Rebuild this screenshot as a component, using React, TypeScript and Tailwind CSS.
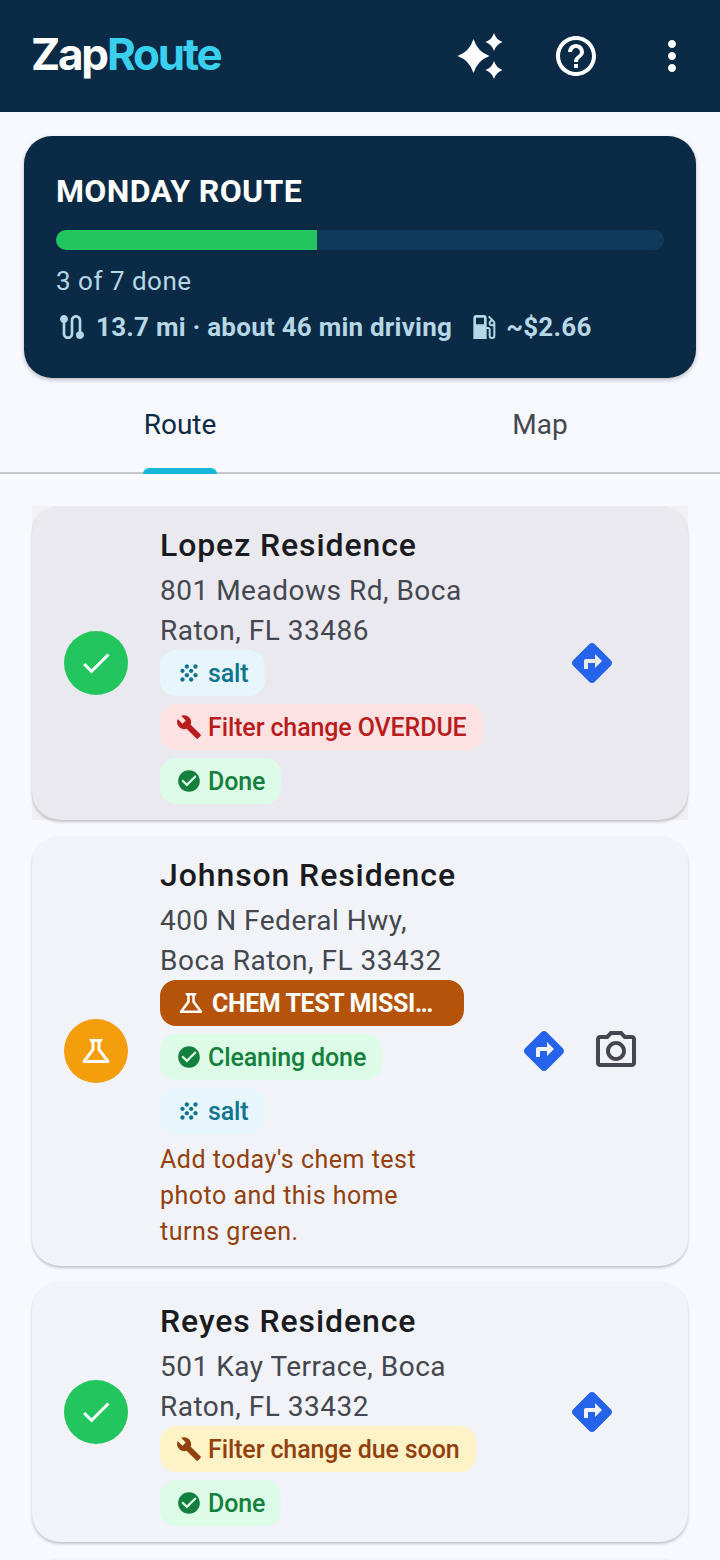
import { ReactNode } from "react";
import {
  MdHelpOutline,
  MdMoreVert,
  MdRoute,
  MdLocalGasStation,
  MdCheck,
  MdOutlineScience,
  MdGrain,
  MdCheckCircle,
  MdDirections,
  MdOutlineCameraAlt,
} from "react-icons/md";

const Wrench = () => (
  <svg viewBox="0 0 24 24" width={26} height={26} fill="currentColor" className="shrink-0">
    <path d="M22.7 19l-9.1-9.1c.9-2.3.4-5-1.5-6.9-2-2-5-2.4-7.4-1.3L9 6 6 9 1.6 4.7C.4 7.1.9 10.1 2.9 12.1c1.9 1.9 4.6 2.4 6.9 1.5l9.1 9.1c.4.4 1 .4 1.4 0l2.3-2.3c.5-.4.5-1.1.1-1.4z" />
  </svg>
);

const star = (cx: number, cy: number, rx: number, ry: number) => {
  const k = 0.25;
  return `M${cx} ${cy - ry}Q${cx + rx * k} ${cy - ry * k} ${cx + rx} ${cy}Q${cx + rx * k} ${cy + ry * k} ${cx} ${cy + ry}Q${cx - rx * k} ${cy + ry * k} ${cx - rx} ${cy}Q${cx - rx * k} ${cy - ry * k} ${cx} ${cy - ry}Z`;
};

const Sparkle = () => (
  <svg viewBox="0 0 48 48" width={48} height={48} fill="#ffffff">
    <path d={star(17.5, 24, 16, 17)} />
    <path d={star(38, 10, 8.5, 9)} />
    <path d={star(38, 38, 8.5, 9)} />
  </svg>
);

function Chip({ tone, icon, children }: { tone: string; icon: ReactNode; children: ReactNode }) {
  return (
    <div className={`flex h-[46px] w-fit items-center gap-[6px] whitespace-nowrap rounded-[16px] px-4 text-[25px] font-medium leading-none tracking-[-0.12px] ${tone}`}>
      {icon}
      <span className="pt-px">{children}</span>
    </div>
  );
}

const salt = (
  <Chip tone="bg-[#e6f6fc] text-[#0e7490]" icon={<MdGrain size={26} />}>
    salt
  </Chip>
);
const done = (label: string) => (
  <Chip tone="bg-[#dcfce7] text-[#15803d]" icon={<MdCheckCircle size={26} />}>
    {label}
  </Chip>
);

function Card({
  bg,
  status,
  title,
  address,
  children,
  trailing,
  pr,
}: {
  bg: string;
  status: ReactNode;
  title: string;
  address: string[];
  children: ReactNode;
  trailing: ReactNode;
  pr: string;
}) {
  return (
    <div className={`flex items-center rounded-[28px] py-4 pl-8 shadow-[0_2px_3px_rgba(0,0,0,0.22)] ${bg} ${pr}`}>
      {status}
      <div className="ml-8 w-[304px] shrink-0">
        <div className="text-[32px] font-medium leading-[46px] tracking-[0.9px] text-[#1a1b20]">{title}</div>
        <div className="mb-[-1px] mt-[3px] text-[28px] leading-[40px] tracking-[0.5px] text-[#44474f]">
          {address.map((a) => (
            <div key={a}>{a}</div>
          ))}
        </div>
        <div className="flex flex-col gap-2">{children}</div>
      </div>
      <div className="ml-auto flex items-center">{trailing}</div>
    </div>
  );
}

const Status = ({ color, icon }: { color: string; icon: ReactNode }) => (
  <div className={`flex h-16 w-16 shrink-0 items-center justify-center rounded-full text-white ${color}`}>{icon}</div>
);

const Dir = () => (
  <div className="flex h-[72px] w-[72px] items-center justify-center text-[#2563eb]">
    <MdDirections size={48} />
  </div>
);

export default function App() {
  return (
    <div className="h-[1560px] w-[720px] overflow-hidden bg-[#f8f9ff] font-['Roboto',sans-serif]">
      <header className="flex h-[112px] items-center bg-[#0b2a45] pl-8">
        <div className="-ml-px mb-[5px] font-['Inter',sans-serif] text-[44px] font-bold leading-none tracking-[-2.2px] text-white">
          Zap<span className="text-[#38d0ee]">Route</span>
        </div>
        <div className="ml-auto flex items-center text-white">
          <div className="flex h-[96px] w-[96px] items-center justify-center">
            <Sparkle />
          </div>
          <div className="flex h-[96px] w-[96px] items-center justify-center">
            <MdHelpOutline size={48} />
          </div>
          <div className="flex h-[96px] w-[96px] items-center justify-center">
            <MdMoreVert size={48} />
          </div>
        </div>
      </header>

      <section className="px-6 pt-6">
        <div className="rounded-[28px] bg-[#0b2a45] px-8 pb-8 pt-[35px] shadow-[0_2px_4px_rgba(0,0,0,0.25)]">
          <div className="text-[32px] font-bold leading-[40px] tracking-[0.35px] text-white">MONDAY ROUTE</div>
          <div className="mt-[19px] h-5 overflow-hidden rounded-[10px] bg-[#0f3a5c]">
            <div className="h-full bg-[#22c55e]" style={{ width: `${(3 / 7) * 100}%` }} />
          </div>
          <div className="mt-[12px] text-[26px] leading-[38px] tracking-[0.5px] text-[#b5d7e6]">3 of 7 done</div>
          <div className="mt-[8px] flex items-center text-[26px] font-bold leading-[38px] tracking-[0.23px] text-[#b5d7e6]">
            <MdRoute size={32} />
            <span className="ml-2">13.7 mi · about 46 min driving</span>
            <MdLocalGasStation size={32} className="ml-[16px]" />
            <span className="ml-[6px]">~$2.66</span>
          </div>
        </div>
      </section>

      <nav className="relative flex h-[96px] border-b-2 border-[#c6c6cc] text-[28px]">
        <div className="flex flex-1 items-center justify-center text-[#0b2a45]">
          <div className="relative">Route</div>
        </div>
        <div className="flex flex-1 items-center justify-center text-[#44474f]">Map</div>
        <div className="absolute bottom-[-2px] left-[143px] h-[6px] w-[74px] rounded-t-[6px] bg-[#18b6d8]" />
      </nav>

      <main className="flex flex-col gap-4 px-8 pt-8">
        <div className="bg-[#f0f0f5]">
          <Card
            bg="bg-[#e9e9ef]"
            pr="pr-[60px]"
            status={<Status color="bg-[#22c55e]" icon={<MdCheck size={36} />} />}
            title="Lopez Residence"
            address={["801 Meadows Rd, Boca", "Raton, FL 33486"]}
            trailing={<Dir />}
          >
            {salt}
            <Chip tone="bg-[#fee2e2] text-[#b91c1c]" icon={<Wrench />}>
              Filter change OVERDUE
            </Chip>
            {done("Done")}
          </Card>
        </div>

        <Card
          bg="bg-[#f1f3f9]"
          pr="pr-[36px]"
          status={<Status color="bg-[#f59e0b]" icon={<MdOutlineScience size={36} />} />}
          title="Johnson Residence"
          address={["400 N Federal Hwy,", "Boca Raton, FL 33432"]}
          trailing={
            <>
              <Dir />
              <div className="flex h-[72px] w-[72px] items-center justify-center text-[#44474f]">
                <MdOutlineCameraAlt size={48} />
              </div>
            </>
          }
        >
          <div className="flex h-[46px] w-[304px] items-center gap-[6px] rounded-[16px] bg-[#b45309] pl-[16px] text-[25px] font-bold leading-none tracking-[-0.4px] text-white">
            <MdOutlineScience size={30} />
            <span className="pt-px">CHEM TEST MISSI…</span>
          </div>
          {done("Cleaning done")}
          {salt}
          <div className="text-[25px] leading-[36px] tracking-[0.5px] text-[#92400e]">
            Add today's chem test
            <br />
            photo and this home
            <br />
            turns green.
          </div>
        </Card>

        <Card
          bg="bg-[#f1f3f9]"
          pr="pr-[60px]"
          status={<Status color="bg-[#22c55e]" icon={<MdCheck size={36} />} />}
          title="Reyes Residence"
          address={["501 Kay Terrace, Boca", "Raton, FL 33432"]}
          trailing={<Dir />}
        >
          <Chip tone="bg-[#fef3c7] text-[#92400e]" icon={<Wrench />}>
            Filter change due soon
          </Chip>
          {done("Done")}
        </Card>

        <div className="h-[200px] rounded-[28px] bg-[#f1f3f9]" />
      </main>
    </div>
  );
}
